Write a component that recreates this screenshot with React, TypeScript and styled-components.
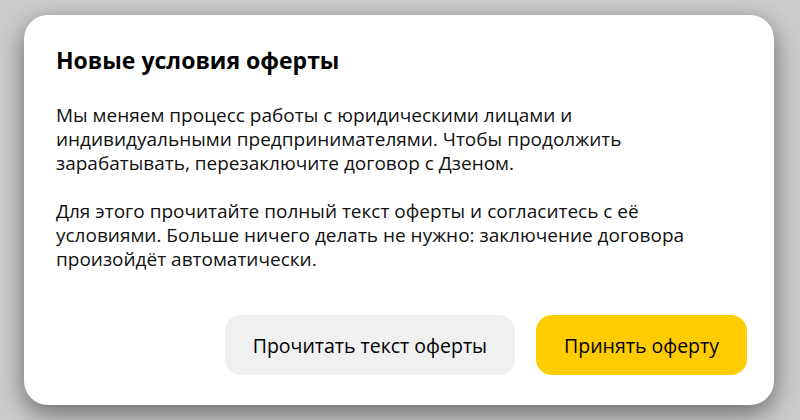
import React from "react";
import styled, { createGlobalStyle } from "styled-components";

const Global = createGlobalStyle`
  html, body { margin: 0; padding: 0; }
  body {
    width: 800px;
    height: 420px;
    overflow: hidden;
    background: #cdcdcd;
    font-family: "Open Sans", "Noto Sans", sans-serif;
    -webkit-font-smoothing: antialiased;
  }
`;

const Backdrop = styled.div`
  box-sizing: border-box;
  width: 800px;
  height: 420px;
  padding: 15px 26px 15px 24px;
  display: flex;
  align-items: flex-start;
`;

const Dialog = styled.section`
  box-sizing: border-box;
  width: 750px;
  height: 390px;
  background: #fff;
  border-radius: 24px;
  box-shadow: 0 8px 26px rgba(0, 0, 0, 0.5);
  padding: 28px 27px 30px 32px;
  display: flex;
  flex-direction: column;
`;

const Title = styled.h2`
  margin: 0;
  font-size: 23px;
  line-height: 34px;
  font-weight: 700;
  color: #000;
`;

const Body = styled.div`
  margin-top: 26px;
  display: flex;
  flex-direction: column;
  gap: 24px;
  max-width: 640px;
`;

const Paragraph = styled.p`
  margin: 0;
  font-size: 19px;
  line-height: 24px;
  color: #111;
`;

const Actions = styled.div`
  margin-top: auto;
  display: flex;
  justify-content: flex-end;
  gap: 21px;
`;

const Button = styled.button<{ $primary?: boolean }>`
  height: 60px;
  padding: 0 28px;
  border: none;
  border-radius: 16px;
  font-family: inherit;
  font-size: 19.5px;
  font-weight: 500;
  color: #000;
  background: ${(p) => (p.$primary ? "#ffcc00" : "#f0f0f0")};
  cursor: pointer;
`;

export default function App() {
  return (
    <>
      <Global />
      <Backdrop>
        <Dialog>
          <Title>Новые условия оферты</Title>
          <Body>
            <Paragraph>
              Мы меняем процесс работы с юридическими лицами и индивидуальными
              предпринимателями. Чтобы продолжить зарабатывать, перезаключите
              договор с Дзеном.
            </Paragraph>
            <Paragraph>
              Для этого прочитайте полный текст оферты и согласитесь с её
              условиями. Больше ничего делать не нужно: заключение договора
              произойдёт автоматически.
            </Paragraph>
          </Body>
          <Actions>
            <Button type="button">Прочитать текст оферты</Button>
            <Button type="button" $primary>
              Принять оферту
            </Button>
          </Actions>
        </Dialog>
      </Backdrop>
    </>
  );
}
